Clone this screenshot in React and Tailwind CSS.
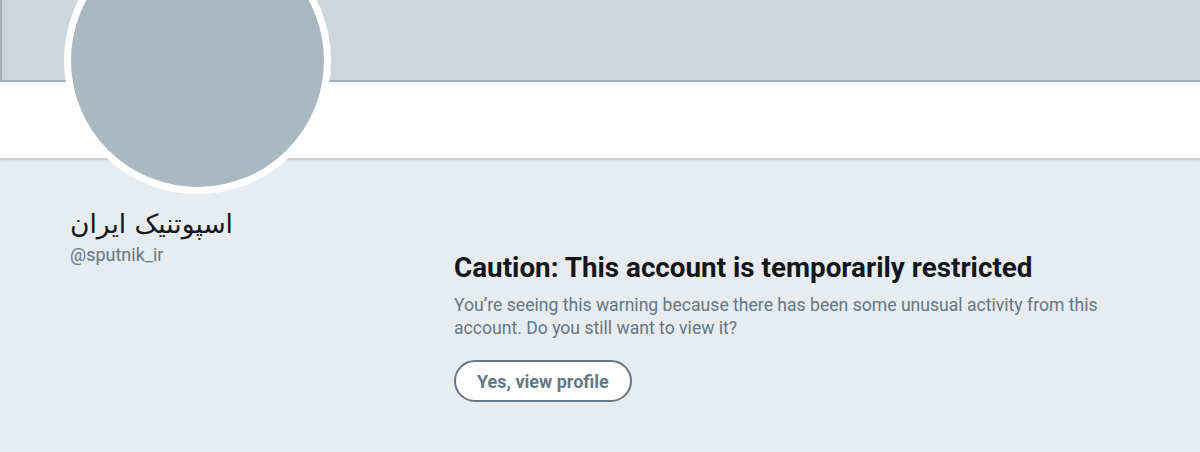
import React from "react"

export default function App() {
    return (
        <div className="relative h-[452px] w-[1200px] overflow-hidden bg-[#e6ecf0] font-['Roboto',sans-serif]">
            <div className="h-[82px] bg-[#ccd6dd] border-l-2 border-b-2 border-[#a4aeb5]" />
            <div className="h-[78px] bg-white border-b-2 border-[#c9cfd3] shadow-[0_1px_2px_rgba(0,0,0,0.08)]" />

            <div className="absolute left-[64px] top-[-73px] w-[267px] h-[267px] rounded-full border-[7px] border-white bg-[#aab8c2]" />

            <div className="flex">
                <div className="w-[454px] pl-[70px] pt-[47px]">
                    <div dir="rtl" className="w-fit text-[26.5px] leading-[33px] text-[#14171a] font-['DejaVu_Sans','Noto_Sans',sans-serif]">اسپوتنیک ایران</div>
                    <div className="mt-[4px] text-[18px] leading-[22px] text-[#657786]">@sputnik_ir</div>
                </div>
                <div className="flex-1 pt-[92px]">
                    <h1 className="text-[27.8px] leading-[32px] font-bold text-[#14171a]">Caution: This account is temporarily restricted</h1>
                    <p className="mt-[10px] w-[660px] text-[17.6px] leading-[23px] text-[#657786]">
                        You’re seeing this warning because there has been some unusual activity from this account. Do you still want to view it?
                    </p>
                    <button className="mt-[20px] h-[42px] px-[21px] rounded-full border-2 border-[#657786] bg-white text-[18px] font-bold text-[#657786]">
                        Yes, view profile
                    </button>
                </div>
            </div>
        </div>
    )
}
